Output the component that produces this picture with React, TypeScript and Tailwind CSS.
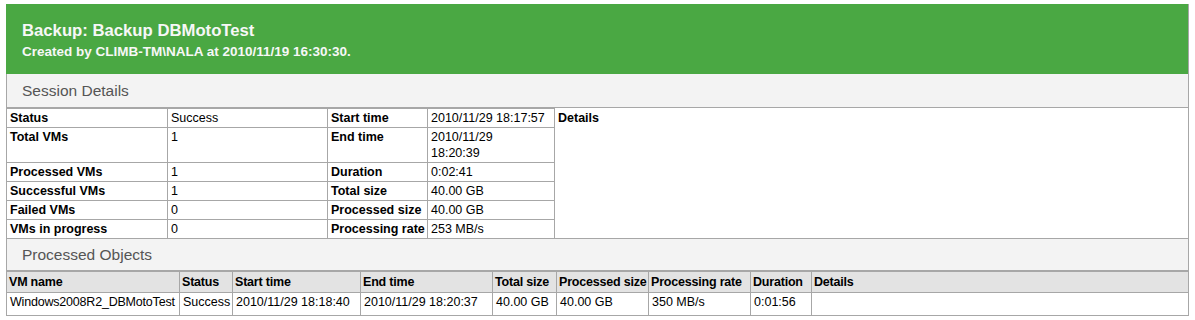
import React from "react";

const font = { fontFamily: "Tahoma, 'Liberation Sans', Arial, sans-serif" };

const L = "border border-[#a7a7a7] px-[3px] align-top font-bold text-[12.5px] leading-[16px] py-[1px] whitespace-nowrap overflow-hidden";
const V = "border border-[#a7a7a7] px-[3px] align-top text-[12.5px] leading-[16px] py-[1px] whitespace-nowrap overflow-hidden";
const H = "border border-[#a7a7a7] px-[2px] align-middle font-bold text-[12.5px] leading-[16px] py-[1px] whitespace-nowrap tracking-[-0.2px]";

export default function App() {
  return (
    <div className="bg-white w-[1195px] h-[320px] pt-[4px] pl-[6px]" style={font}>
      <div className="w-[1183px] border-r border-[#a7a7a7]">
        <div className="bg-[#4aa843] h-[70px] pl-[16px] pt-[17px] text-[#f7f7f7]">
          <div className="text-[16.7px] font-bold leading-[20px]">Backup: Backup DBMotoTest</div>
          <div className="text-[13.5px] font-bold leading-[16px] mt-[3px]">Created by CLIMB-TM\NALA at 2010/11/19 16:30:30.</div>
        </div>
        <div className="bg-[#f3f3f3] h-[34px] border-l border-b border-[#a7a7a7] pl-[15px] flex items-center text-[15.5px] text-[#555]">Session Details</div>
        <table className="table-fixed border-collapse w-[1183px] text-black">
          <colgroup>
            <col className="w-[161px]" />
            <col className="w-[160px]" />
            <col className="w-[100px]" />
            <col className="w-[127px]" />
            <col />
          </colgroup>
          <tbody>
            <tr className="h-[19px]">
              <td className={L}>Status</td>
              <td className={V}>Success</td>
              <td className={L}>Start time</td>
              <td className={V}>2010/11/29 18:17:57</td>
              <td rowSpan={6} className="px-[3px] align-top font-bold text-[12.5px] leading-[16px] py-[1px] border-l border-b border-[#a7a7a7]">Details</td>
            </tr>
            <tr className="h-[33px]">
              <td className={L}>Total VMs</td>
              <td className={V}>1</td>
              <td className={L}>End time</td>
              <td className={V + " leading-[15px]"}>2010/11/29<br />18:20:39</td>
            </tr>
            <tr className="h-[19px]">
              <td className={L}>Processed VMs</td>
              <td className={V}>1</td>
              <td className={L}>Duration</td>
              <td className={V}>0:02:41</td>
            </tr>
            <tr className="h-[19px]">
              <td className={L}>Successful VMs</td>
              <td className={V}>1</td>
              <td className={L}>Total size</td>
              <td className={V}>40.00 GB</td>
            </tr>
            <tr className="h-[19px]">
              <td className={L}>Failed VMs</td>
              <td className={V}>0</td>
              <td className={L}>Processed size</td>
              <td className={V}>40.00 GB</td>
            </tr>
            <tr className="h-[19px]">
              <td className={L}>VMs in progress</td>
              <td className={V}>0</td>
              <td className={L}>Processing rate</td>
              <td className={V}>253 MB/s</td>
            </tr>
          </tbody>
        </table>
        <div className="bg-[#f3f3f3] h-[32px] border-l border-b border-[#a7a7a7] pl-[15px] flex items-center text-[15.5px] text-[#555]">Processed Objects</div>
        <table className="table-fixed border-collapse w-[1183px] text-black">
          <colgroup>
            <col className="w-[173px]" />
            <col className="w-[53px]" />
            <col className="w-[128px]" />
            <col className="w-[132px]" />
            <col className="w-[64px]" />
            <col className="w-[92px]" />
            <col className="w-[102px]" />
            <col className="w-[61px]" />
            <col />
          </colgroup>
          <tbody>
            <tr className="h-[21px] bg-[#e3e3e3]">
              {["VM name", "Status", "Start time", "End time", "Total size", "Processed size", "Processing rate", "Duration", "Details"].map((h) => (
                <td key={h} className={H}>{h}</td>
              ))}
            </tr>
            <tr className="h-[23px]">
              {["Windows2008R2_DBMotoTest", "Success", "2010/11/29 18:18:40", "2010/11/29 18:20:37", "40.00 GB", "40.00 GB", "350 MB/s", "0:01:56", ""].map((v, i) => (
                <td key={i} className={V + " align-middle" + (i === 0 ? " tracking-[-0.2px]" : "")}>{v}</td>
              ))}
            </tr>
          </tbody>
        </table>
      </div>
    </div>
  );
}
